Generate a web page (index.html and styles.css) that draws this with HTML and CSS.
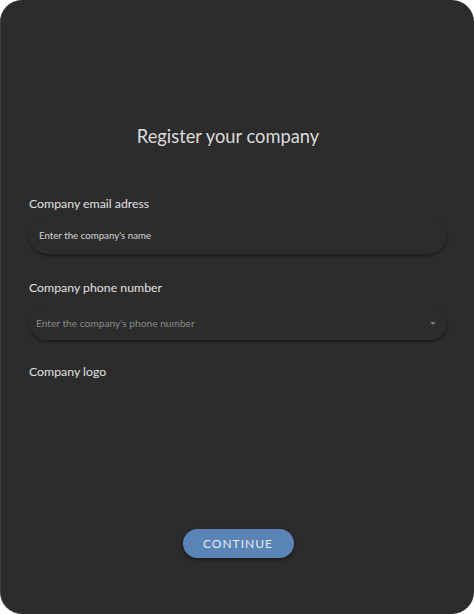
FILE: index.html
```html
<!DOCTYPE html>
<html>
<head>
<meta charset="utf-8">
<link rel="stylesheet" href="styles.css">
</head>
<body>
<div class="card">
  <h1 class="title">Register your company</h1>
  <div class="field field-first">
    <label class="label">Company email adress</label>
    <div class="input"><span class="value">Enter the company's name</span></div>
  </div>
  <div class="field field-second">
    <label class="label">Company phone number</label>
    <div class="input select"><span class="placeholder">Enter the company's phone number</span><span class="caret"></span></div>
  </div>
  <div class="field field-third">
    <label class="label">Company logo</label>
  </div>
  <div class="spacer"></div>
  <div class="actions">
    <button class="btn">CONTINUE</button>
  </div>
</div>
</body>
</html>
```
FILE: styles.css
```css
html, body {
  margin: 0;
  padding: 0;
  background: #ffffff;
  height: 100%;
}
body {
  font-family: Lato, "Open Sans", sans-serif;
}
.card {
  box-sizing: border-box;
  width: 474px;
  height: 614px;
  background: #2c2c2c;
  border-left: 1px solid #3c3c3c;
  border-radius: 22px;
  padding: 0 27px 0 28px;
  display: flex;
  flex-direction: column;
}
.title {
  margin: 124px 0 0 0;
  padding-right: 20px;
  font-size: 18.3px;
  font-weight: 400;
  color: #dcdcdc;
  text-align: center;
  line-height: 24px;
}
.field {
  display: flex;
  flex-direction: column;
}
.field-first { margin-top: 48px; }
.field-second { margin-top: 26px; }
.field-third { margin-top: 24px; }
.label {
  font-size: 12.3px;
  color: #e2e2e2;
  line-height: 16px;
}
.input {
  margin-top: 4px;
  height: 38px;
  border-radius: 19px;
  background: #2c2c2c;
  box-shadow: 0 2px 3px rgba(0,0,0,0.4);
  display: flex;
  align-items: center;
  padding: 0 10px;
  font-size: 9.7px;
}
.value { color: #d4d4d4; }
.select {
  padding-left: 7px;
  height: 34px;
  border-radius: 17px;
  margin-top: 10px;
  font-size: 10.2px;
}
.placeholder { color: #8a8a8a; flex: 1; }
.caret {
  width: 0; height: 0;
  border-left: 3px solid transparent;
  border-right: 3px solid transparent;
  border-top: 3px solid #777;
  margin-right: 1px;
}
.spacer { flex: 1; }
.actions {
  display: flex;
  justify-content: center;
  margin-bottom: 56px;
}
.btn {
  width: 111px;
  height: 29px;
  border: none;
  border-radius: 15px;
  background: #5a84b6;
  color: #e6ebf2;
  font-family: Lato, sans-serif;
  font-size: 12px;
  letter-spacing: 1px;
  box-shadow: 0 2px 4px rgba(0,0,0,0.4);
  padding: 0;
}
```
